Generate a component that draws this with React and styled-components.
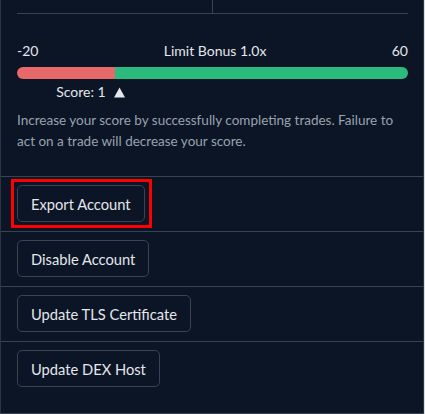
import React from "react";
import styled, { createGlobalStyle } from "styled-components";

const Global = createGlobalStyle`
  html, body { margin: 0; padding: 0; background: #d9dce0; }
  body { font-family: "Lato", "Noto Sans", sans-serif; }
  * { box-sizing: border-box; }
`;

const Panel = styled.div`
  width: 424px;
  height: 414px;
  background: #0b1526;
  border-left: 1px solid #2a3442;
  border-right: 1px solid #2a3442;
  border-bottom: 1px solid #3a4250;
  color: #e4e7eb;
  overflow: hidden;
`;

const TopGrid = styled.div`
  margin: 0 15px 0 16px;
  height: 14px;
  display: grid;
  grid-template-columns: 196px 1fr;
  border-bottom: 1px solid #3a4250;
`;

const Cell = styled.div`
  border-right: ${(p) => (p.$divider ? "1px solid #3a4250" : "none")};
`;

const Tier = styled.div`
  padding: 28px 15px 0 16px;
  height: 162px;
`;

const Labels = styled.div`
  display: flex;
  justify-content: space-between;
  font-size: 14px;
  line-height: 18px;
  height: 18px;
`;

const Bar = styled.div`
  position: relative;
  margin-top: 7px;
  height: 12px;
  border-radius: 6px;
  overflow: hidden;
  display: flex;
`;

const Seg = styled.div`
  background: ${(p) => p.$color};
  flex: ${(p) => p.$grow} 0 0;
`;

const ScoreRow = styled.div`
  position: relative;
  height: 22px;
  margin-top: 2px;
`;

const ScoreLabel = styled.div`
  position: absolute;
  top: 0;
  transform: translateX(-100%);
  display: flex;
  align-items: center;
  gap: 8px;
  font-size: 14px;
  line-height: 22px;
  white-space: nowrap;
  margin-left: 6px;
`;

const Note = styled.p`
  margin: 7px 0 0;
  font-size: 13.5px;
  line-height: 21px;
  color: #9aa2ad;
`;

const Row = styled.div`
  height: 55px;
  border-top: 1px solid #3a4250;
  padding: 8px 16px;
  display: flex;
  align-items: flex-start;
`;

const Button = styled.button`
  position: relative;
  height: 37px;
  padding: 1px 13px 0 13px;
  background: #0b1526;
  color: #e4e7eb;
  border: 1px solid #3a4352;
  border-radius: 5px;
  font-family: "Lato", "Noto Sans", sans-serif;
  font-size: 14.7px;
  cursor: pointer;
  outline: none;

  &::after {
    content: "";
    display: ${(p) => (p.$focused ? "block" : "none")};
    position: absolute;
    inset: -7px -8px -7px -7px;
    border: 3px solid #ff0000;
    pointer-events: none;
  }
`;

const Triangle = () => (
  <svg width="12" height="11" viewBox="0 0 12 11">
    <polygon points="6,0.5 11.5,10.5 0.5,10.5" fill="#e4e7eb" />
  </svg>
);

export default function App() {
  const min = -20;
  const max = 60;
  const score = 1;
  const pct = ((score - min) / (max - min)) * 100;
  return (
    <>
      <Global />
      <Panel>
        <TopGrid>
          <Cell $divider />
          <Cell />
        </TopGrid>
        <Tier>
          <Labels>
            <span>-20</span>
            <span>Limit Bonus 1.0x</span>
            <span>60</span>
          </Labels>
          <Bar>
            <Seg $color="#e8696a" $grow={20} />
            <Seg $color="#2bbb7d" $grow={60} />
          </Bar>
          <ScoreRow>
            <ScoreLabel style={{ left: `${pct}%` }}>
              <span>Score: 1</span>
              <Triangle />
            </ScoreLabel>
          </ScoreRow>
          <Note>
            Increase your score by successfully completing trades. Failure to
            act on a trade will decrease your score.
          </Note>
        </Tier>
        <Row>
          <Button $focused>Export Account</Button>
        </Row>
        <Row>
          <Button>Disable Account</Button>
        </Row>
        <Row>
          <Button>Update TLS Certificate</Button>
        </Row>
        <Row>
          <Button>Update DEX Host</Button>
        </Row>
      </Panel>
    </>
  );
}
